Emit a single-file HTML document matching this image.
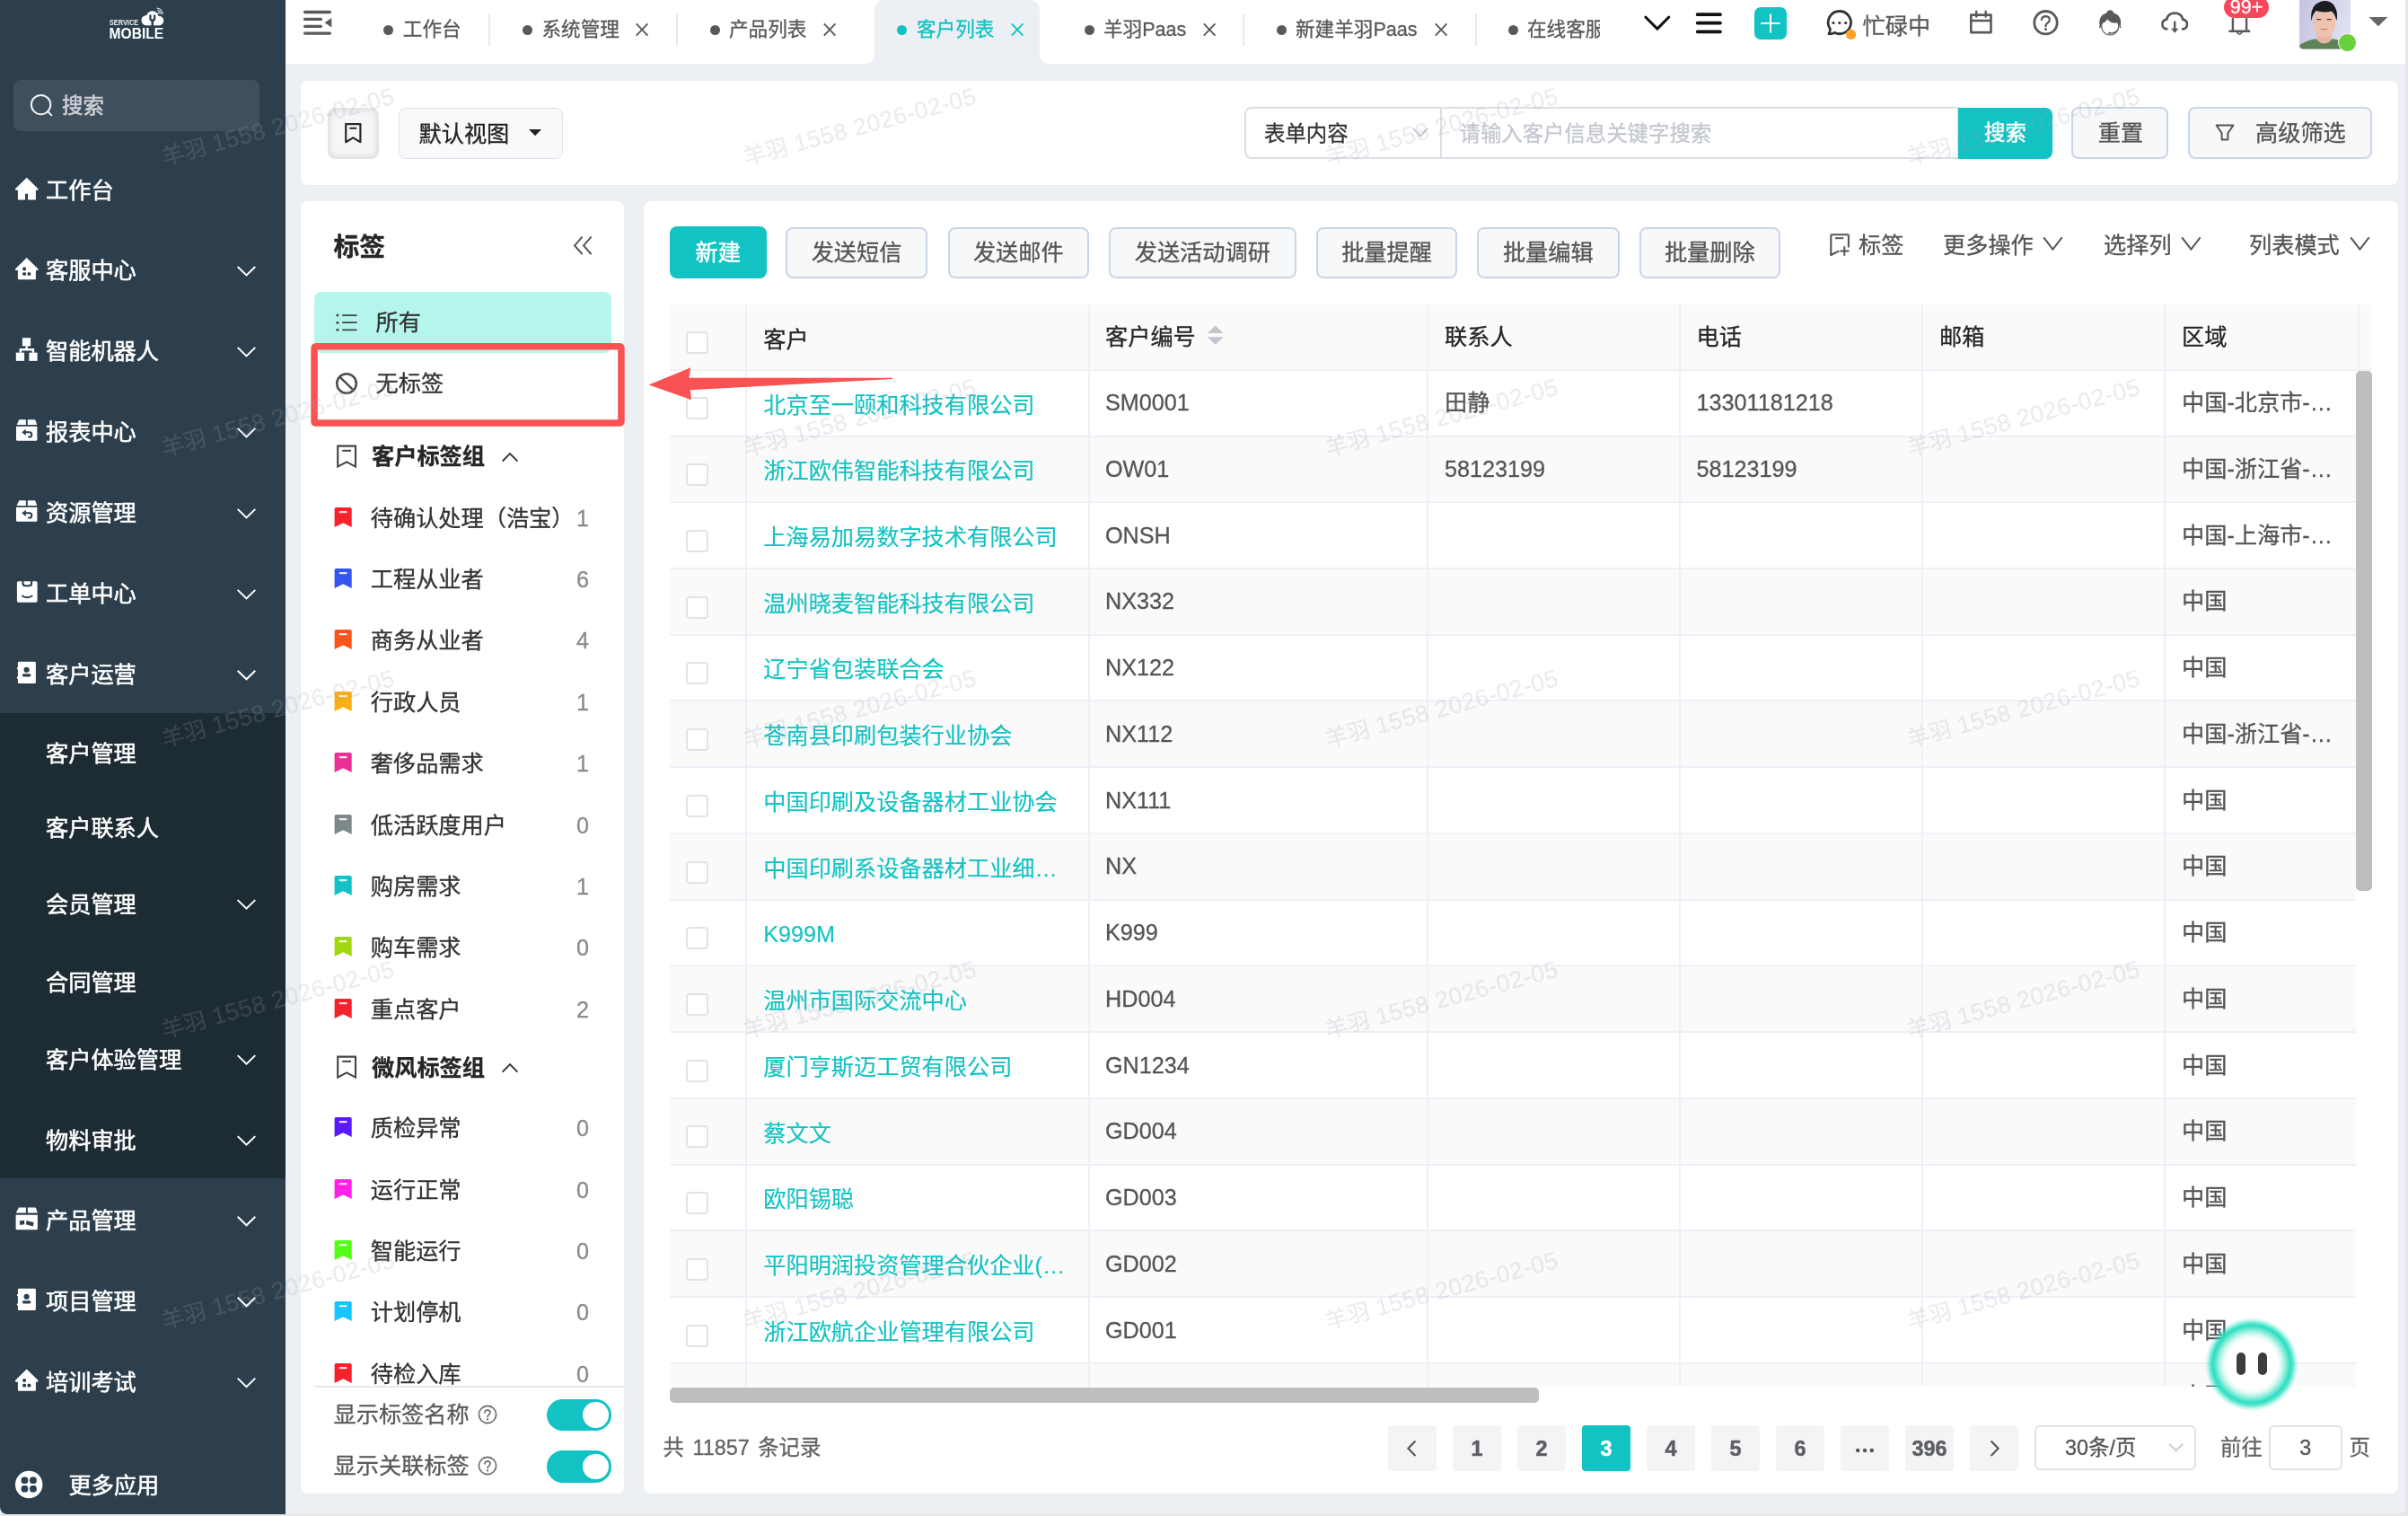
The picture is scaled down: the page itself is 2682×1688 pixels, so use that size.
<!DOCTYPE html>
<html lang="zh-CN">
<head>
<meta charset="utf-8">
<title>客户列表</title>
<style>
*{box-sizing:border-box;margin:0;padding:0}
html,body{width:2682px;height:1688px;overflow:hidden;background:#e6e6e6}
body{font-family:"Liberation Sans","Noto Sans CJK SC",sans-serif;position:relative;color:#333;-webkit-font-smoothing:antialiased}
.a{position:absolute;display:block}
.t{position:absolute;display:block;line-height:40px;height:40px;white-space:nowrap}
body{-webkit-text-stroke:0.3px}
.wm{-webkit-text-stroke:0.2px}
#app{position:absolute;left:0;top:0;width:2679px;height:1686px;overflow:hidden;will-change:transform;background:#eceff4;border-radius:0 0 8px 8px}
.side{background:#2d3f4c}
.sub{background:#1d2b33}
.card{background:#fff;border-radius:8px}
.btn{border:2px solid #c9d6e7;background:#f7f8fa;border-radius:8px}
.pbtn{background:#13c2c2;border-radius:8px}
.pg{background:#f4f4f5;border-radius:4px;text-align:center;font-weight:700;color:#5c5f66;font-size:23.4px;line-height:52.4px;-webkit-text-stroke:0.5px}
.cb{border:2px solid #e1e3e8;border-radius:4px;background:#fff}
.vl{background:#eff0f7;width:2px}
.hl{background:#eff0f7;height:2px}
.wm{position:absolute;white-space:nowrap;font-size:26.6px;letter-spacing:0.45px;line-height:36px;color:rgba(160,165,182,0.2);transform:rotate(-15deg);transform-origin:0 100%;pointer-events:none}
.wm b{font-weight:400;font-size:25.2px;letter-spacing:0}</style>
</head>
<body>
<div id="app">
<aside class="a side" style="left:0;top:0;width:318px;height:1686px;-webkit-text-stroke:0.55px"><div class="a sub" style="left:0px;top:793.8px;width:318px;height:518.2px;"></div>
<svg class="a" style="left:118px;top:4px" width="70" height="44" viewBox="118 4 70 44" xmlns="http://www.w3.org/2000/svg"><text x="121.8" y="28.3" font-family='Liberation Sans,Noto Sans CJK SC,sans-serif' font-weight="700" font-size="9.2" fill="#eef1f3" textLength="32.4" lengthAdjust="spacingAndGlyphs">SERVICE</text><text x="121.6" y="43.1" font-family='Liberation Sans,Noto Sans CJK SC,sans-serif' font-weight="700" font-size="17.2" fill="#fff" textLength="60.6" lengthAdjust="spacingAndGlyphs">MOBILE</text><g fill="#fff"><circle cx="163.2" cy="22.6" r="5.7"/><circle cx="169.8" cy="19.2" r="6.9"/><circle cx="177" cy="23" r="5.3"/><rect x="163.2" y="21.5" width="13.8" height="6.8"/></g><path d="M167.6 17.5 V20.5 Q167.6 22.7 169.8 22.9 V28.6 M172 17.5 V20.5 Q172 22.7 169.8 22.9" fill="none" stroke="#2d3f4c" stroke-width="2.6" stroke-linecap="round"/><rect x="168.6" y="16.4" width="2.5" height="4.6" fill="#fff"/><path d="M174.6 9 Q180.6 10 181.4 15.8 M175.2 11.3 Q178.7 12.2 179.3 15.8 M175.8 13.4 Q177 14 177.3 15.6" fill="none" stroke="#e9edf0" stroke-width="1.1"/></svg>
<div class="a" style="left:15px;top:89px;width:274px;height:57px;background:#3f4f5c;border-radius:8px"></div>
<svg class="a" style="left:30px;top:102px;" width="32" height="32" viewBox="0 0 32 32" xmlns="http://www.w3.org/2000/svg"><circle cx="15.6" cy="14.6" r="10.7" fill="none" stroke="#f2f4f5" stroke-width="2"/><path d="M23.4 22.4 L27.4 26.4" stroke="#f2f4f5" stroke-width="2" stroke-linecap="round"/></svg>
<span class="t" style="left:69px;top:98px;font-size:23.4px;color:#cdd2d7;">搜索</span>
<span class="t" style="left:51px;top:192.4px;font-size:25.2px;color:#fff;">工作台</span>
<span class="t" style="left:51px;top:281.35px;font-size:25.2px;color:#fff;">客服中心</span>
<span class="t" style="left:51px;top:371.3px;font-size:25.2px;color:#fff;">智能机器人</span>
<span class="t" style="left:51px;top:461.3px;font-size:25.2px;color:#fff;">报表中心</span>
<span class="t" style="left:51px;top:551.3px;font-size:25.2px;color:#fff;">资源管理</span>
<span class="t" style="left:51px;top:641.3px;font-size:25.2px;color:#fff;">工单中心</span>
<span class="t" style="left:51px;top:731.2px;font-size:25.2px;color:#fff;">客户运营</span>
<span class="t" style="left:51px;top:1339.2px;font-size:25.2px;color:#fff;">产品管理</span>
<span class="t" style="left:51px;top:1429.2px;font-size:25.2px;color:#fff;">项目管理</span>
<span class="t" style="left:51px;top:1519px;font-size:25.2px;color:#fff;">培训考试</span>
<span class="t" style="left:51px;top:818.9px;font-size:25.2px;color:#fff;">客户管理</span>
<span class="t" style="left:51px;top:901.5px;font-size:25.2px;color:#fff;">客户联系人</span>
<span class="t" style="left:51px;top:986.5px;font-size:25.2px;color:#fff;">会员管理</span>
<span class="t" style="left:51px;top:1073.5px;font-size:25.2px;color:#fff;">合同管理</span>
<span class="t" style="left:51px;top:1159.5px;font-size:25.2px;color:#fff;">客户体验管理</span>
<span class="t" style="left:51px;top:1249.5px;font-size:25.2px;color:#fff;">物料审批</span>
<span class="t" style="left:76.5px;top:1633.5px;font-size:25.2px;color:#fff;">更多应用</span>
<svg class="a" style="left:0;top:0" width="318" height="1685" viewBox="0 0 318 1685" fill="#fff" xmlns="http://www.w3.org/2000/svg"><path d="M29.7 197.8 L42.3 210 Q43.3 211.4 41.7 211.8 L39.9 211.8 V222.4 H31.1 V215.8 H28 V222.4 H19.9 V211.8 H17.8 Q16.2 211.4 17.2 210 Z"/><path d="M29.7 286.9 L42.3 299.2 Q43.3 300.6 41.7 301 L39.9 301 V310.2 Q39.9 311.2 38.9 311.2 H20.9 Q19.9 311.2 19.9 310.2 V301 H17.8 Q16.2 300.6 17.2 299.2 Z"/><rect x="25.2" y="297.6" width="3.8" height="3.6" rx="1.3" fill="#2d3f4c"/><rect x="25.2" y="303.2" width="3.8" height="3.6" rx="1.3" fill="#2d3f4c"/><rect x="30.5" y="303.2" width="3.8" height="3.6" rx="1.3" fill="#2d3f4c"/><path d="M264.7 296.95 L274.5 306.45 L284.3 296.95" fill="none" stroke="#fff" stroke-width="2"/><rect x="24.9" y="376.15" width="9.2" height="9.2"/><rect x="17.8" y="392.65" width="9.3" height="9.2"/><rect x="32.4" y="392.65" width="9.2" height="9.2"/><path d="M29.7 385.15 V389.15 M22.8 392.75 V389.15 H36.9 V392.75" fill="none" stroke="#fff" stroke-width="2.5"/><path d="M264.7 386.9 L274.5 396.4 L284.3 386.9" fill="none" stroke="#fff" stroke-width="2"/><path d="M21.3 467.3 H28.9 V472.9 H18.6 Z M30.8 467.3 H38.3 Q39.2 467.3 39.6 468.3 L41.2 472.9 H30.8 Z"/><path d="M18 474.8 H41.4 V489.2 Q41.4 490.7 39.9 490.7 H19.5 Q18 490.7 18 489.2 Z"/><path d="M24.2 481.3 L28.9 477.7 V484.9 Z" fill="#2d3f4c"/><path d="M28.5 481.3 H33 Q35.3 481.3 35.3 483.9 Q35.3 486.5 33 486.5 H31.2" fill="none" stroke="#2d3f4c" stroke-width="2"/><path d="M264.7 476.9 L274.5 486.4 L284.3 476.9" fill="none" stroke="#fff" stroke-width="2"/><path d="M21.3 557.3 H28.9 V562.9 H18.6 Z M30.8 557.3 H38.3 Q39.2 557.3 39.6 558.3 L41.2 562.9 H30.8 Z"/><path d="M18 564.8 H41.4 V579.2 Q41.4 580.7 39.9 580.7 H19.5 Q18 580.7 18 579.2 Z"/><path d="M24.2 571.3 L28.9 567.7 V574.9 Z" fill="#2d3f4c"/><path d="M28.5 571.3 H33 Q35.3 571.3 35.3 573.9 Q35.3 576.5 33 576.5 H31.2" fill="none" stroke="#2d3f4c" stroke-width="2"/><path d="M264.7 566.9 L274.5 576.4 L284.3 566.9" fill="none" stroke="#fff" stroke-width="2"/><rect x="18.9" y="647.3" width="22.7" height="23.4" rx="1.6"/><path d="M25.5 646.8 V649.5 Q25.5 652.3 28.6 652.3 H32 Q35.1 652.3 35.1 649.5 V646.8" fill="none" stroke="#2d3f4c" stroke-width="2.1"/><path d="M24.9 663.5 Q30.3 666.9 35.6 663.5" fill="none" stroke="#2d3f4c" stroke-width="2" stroke-linecap="round"/><path d="M264.7 656.9 L274.5 666.4 L284.3 656.9" fill="none" stroke="#fff" stroke-width="2"/><rect x="19.9" y="736.75" width="20" height="24.3" rx="1.4"/><rect x="18.9" y="742.95" width="2" height="2.4" rx="0.8"/><rect x="18.9" y="753.35" width="2" height="2.4" rx="0.8"/><circle cx="29.6" cy="745.75" r="3.1" fill="#2d3f4c"/><rect x="24.8" y="750.15" width="9.6" height="3.3" rx="1.6" fill="#2d3f4c"/><path d="M264.7 746.8 L274.5 756.3 L284.3 746.8" fill="none" stroke="#fff" stroke-width="2"/><path d="M20.9 1344.6 H28.9 V1350.6 H17.8 Z M30.9 1344.6 H38.9 Q39.8 1344.6 40.2 1345.6 L41.8 1350.6 H30.9 Z"/><path d="M17.6 1352.7 H41.9 V1367.7 Q41.9 1369.2 40.4 1369.2 H19.1 Q17.6 1369.2 17.6 1367.7 Z"/><path d="M21.7 1359.6 L26.9 1358.8 L27.4 1363.2 L22.3 1364 Z M29.6 1359 L37.8 1361.2 L36.7 1365.5 L28.9 1363.3 Z" fill="#2d3f4c"/><path d="M264.7 1354.8 L274.5 1364.3 L284.3 1354.8" fill="none" stroke="#fff" stroke-width="2"/><rect x="19.9" y="1434.75" width="20" height="24.3" rx="1.4"/><rect x="18.9" y="1440.95" width="2" height="2.4" rx="0.8"/><rect x="18.9" y="1451.35" width="2" height="2.4" rx="0.8"/><circle cx="29.6" cy="1443.75" r="3.1" fill="#2d3f4c"/><rect x="24.8" y="1448.15" width="9.6" height="3.3" rx="1.6" fill="#2d3f4c"/><path d="M264.7 1444.8 L274.5 1454.3 L284.3 1444.8" fill="none" stroke="#fff" stroke-width="2"/><path d="M29.7 1524.55 L42.3 1536.85 Q43.3 1538.25 41.7 1538.65 L39.9 1538.65 V1547.85 Q39.9 1548.85 38.9 1548.85 H20.9 Q19.9 1548.85 19.9 1547.85 V1538.65 H17.8 Q16.2 1538.25 17.2 1536.85 Z"/><rect x="25.2" y="1535.25" width="3.8" height="3.6" rx="1.3" fill="#2d3f4c"/><rect x="25.2" y="1540.85" width="3.8" height="3.6" rx="1.3" fill="#2d3f4c"/><rect x="30.5" y="1540.85" width="3.8" height="3.6" rx="1.3" fill="#2d3f4c"/><path d="M264.7 1534.6 L274.5 1544.1 L284.3 1534.6" fill="none" stroke="#fff" stroke-width="2"/><path d="M264.7 1002.1 L274.5 1011.6 L284.3 1002.1" fill="none" stroke="#fff" stroke-width="2"/><path d="M264.7 1175.1 L274.5 1184.6 L284.3 1175.1" fill="none" stroke="#fff" stroke-width="2"/><path d="M264.7 1265.1 L274.5 1274.6 L284.3 1265.1" fill="none" stroke="#fff" stroke-width="2"/><circle cx="32.2" cy="1653" r="15.2"/><g fill="#2d3f4c"><rect x="23.6" y="1644.4" width="7.7" height="7.7" rx="3.4"/><rect x="33.1" y="1644.4" width="7.7" height="7.7" rx="3.4"/><rect x="23.6" y="1653.9" width="7.7" height="7.7" rx="3.4"/><rect x="33.1" y="1653.9" width="7.7" height="7.7" rx="3.4"/></g></svg></aside>
<header class="a" style="left:318px;top:0;width:2361px;height:71px;background:#fff"><svg class="a" style="left:18px;top:10px;" width="36" height="31" viewBox="0 0 36 31" xmlns="http://www.w3.org/2000/svg"><g stroke="#595959" stroke-width="3.3" stroke-linecap="round"><path d="M3.6 3.5 H31.4 M3.6 11.4 H21.4 M3.6 19.3 H21.4 M3.6 27.2 H31.4"/></g><path d="M25.6 15.3 L33.3 9.9 V20.6 Z" fill="#595959"/></svg>
<svg class="a" style="left:644px;top:0px;" width="208" height="71" viewBox="0 0 208 71" xmlns="http://www.w3.org/2000/svg"><path d="M0 71 Q12 71 12 59 V12 Q12 0 24 0 H184 Q196 0 196 12 V59 Q196 71 208 71 Z" fill="#eceff4"/></svg>
<div class="a" style="left:109.1px;top:27.5px;width:11px;height:11px;border-radius:50%;background:#595959"></div>
<span class="t" style="left:130.8px;top:13.1px;font-size:21.6px;color:#595959;">工作台</span>
<div class="a" style="left:264px;top:27.5px;width:11px;height:11px;border-radius:50%;background:#595959"></div>
<span class="t" style="left:285.5px;top:13.1px;font-size:21.6px;color:#595959;">系统管理</span>
<svg class="a" style="left:389px;top:24.3px;" width="16" height="18" viewBox="0 0 16 18" xmlns="http://www.w3.org/2000/svg"><path d="M1.8 2.4 L14.4 15.6 M14.4 2.4 L1.8 15.6" fill="none" stroke="#595959" stroke-width="1.9"/></svg>
<div class="a" style="left:472.5px;top:27.5px;width:11px;height:11px;border-radius:50%;background:#595959"></div>
<span class="t" style="left:494px;top:13.1px;font-size:21.6px;color:#595959;">产品列表</span>
<svg class="a" style="left:598px;top:24.3px;" width="16" height="18" viewBox="0 0 16 18" xmlns="http://www.w3.org/2000/svg"><path d="M1.8 2.4 L14.4 15.6 M14.4 2.4 L1.8 15.6" fill="none" stroke="#595959" stroke-width="1.9"/></svg>
<div class="a" style="left:681px;top:27.5px;width:11px;height:11px;border-radius:50%;background:#13c2c2"></div>
<span class="t" style="left:703px;top:13.1px;font-size:21.6px;color:#13c2c2;">客户列表</span>
<svg class="a" style="left:806.8px;top:24.3px;" width="16" height="18" viewBox="0 0 16 18" xmlns="http://www.w3.org/2000/svg"><path d="M1.8 2.4 L14.4 15.6 M14.4 2.4 L1.8 15.6" fill="none" stroke="#13c2c2" stroke-width="1.9"/></svg>
<div class="a" style="left:890px;top:27.5px;width:11px;height:11px;border-radius:50%;background:#595959"></div>
<span class="t" style="left:911px;top:13.1px;font-size:21.6px;color:#595959;">羊羽Paas</span>
<svg class="a" style="left:1021px;top:24.3px;" width="16" height="18" viewBox="0 0 16 18" xmlns="http://www.w3.org/2000/svg"><path d="M1.8 2.4 L14.4 15.6 M14.4 2.4 L1.8 15.6" fill="none" stroke="#595959" stroke-width="1.9"/></svg>
<div class="a" style="left:1103.5px;top:27.5px;width:11px;height:11px;border-radius:50%;background:#595959"></div>
<span class="t" style="left:1125px;top:13.1px;font-size:21.6px;color:#595959;">新建羊羽Paas</span>
<svg class="a" style="left:1278.8px;top:24.3px;" width="16" height="18" viewBox="0 0 16 18" xmlns="http://www.w3.org/2000/svg"><path d="M1.8 2.4 L14.4 15.6 M14.4 2.4 L1.8 15.6" fill="none" stroke="#595959" stroke-width="1.9"/></svg>
<div class="a" style="left:1361.5px;top:27.5px;width:11px;height:11px;border-radius:50%;background:#595959"></div>
<div class="a" style="left:1382px;top:12px;width:81.5px;height:42px;overflow:hidden"><span class="t" style="left:1px;top:1.1px;font-size:21.6px;color:#595959">在线客服</span></div>
<div class="a" style="left:226px;top:15px;width:2px;height:36px;background:#e9e9e9"></div>
<div class="a" style="left:434.8px;top:15px;width:2px;height:36px;background:#e9e9e9"></div>
<div class="a" style="left:1066px;top:15px;width:2px;height:36px;background:#e9e9e9"></div>
<div class="a" style="left:1324.5px;top:15px;width:2px;height:36px;background:#e9e9e9"></div>
<svg class="a" style="left:1510px;top:14px;" width="36" height="24" viewBox="0 0 36 24" xmlns="http://www.w3.org/2000/svg"><path d="M4.8 5 L17.9 18.1 L30.8 5" fill="none" stroke="#111" stroke-width="3" stroke-linecap="round" stroke-linejoin="round"/></svg>
<svg class="a" style="left:1568px;top:12px;" width="34" height="28" viewBox="0 0 34 28" xmlns="http://www.w3.org/2000/svg"><path d="M4.6 4.2 H30 M4.6 13.6 H30 M4.6 23.3 H30" fill="none" stroke="#111" stroke-width="3.7" stroke-linecap="round"/></svg>
<div class="a" style="left:1636px;top:8px;width:36px;height:36px;background:#13c2c2;border-radius:7px"><svg class="a" style="left:0;top:0" width="36" height="36" viewBox="0 0 36 36"><path d="M18 7.6 V28.4 M7.4 18 H28.4" stroke="#fff" stroke-width="2" fill="none"/></svg></div>
<svg class="a" style="left:1712px;top:8px;" width="40" height="40" viewBox="0 0 40 40" xmlns="http://www.w3.org/2000/svg"><path d="M18.9 4.5 A12.6 12.6 0 1 1 13.2 28.3 Q10.4 30.2 6.9 29.6 Q8.6 27.4 8.4 24.2 A12.6 12.6 0 0 1 18.9 4.5 Z" fill="none" stroke="#333" stroke-width="2.8" stroke-linejoin="round"/><circle cx="12" cy="17.5" r="1.6" fill="#333"/><circle cx="18.8" cy="17.5" r="1.6" fill="#333"/><circle cx="25.7" cy="17.5" r="1.6" fill="#333"/><circle cx="31.6" cy="30.4" r="5.6" fill="#ffa229"/></svg>
<span class="t" style="left:1756.5px;top:8.8px;font-size:25.2px;color:#595959;">忙碌中</span>
<svg class="a" style="left:1872px;top:10px;" width="34" height="32" viewBox="0 0 34 32" xmlns="http://www.w3.org/2000/svg"><path d="M5.3 6.6 H27.5 V26.1 H5.3 Z M5.3 13 H27.5" fill="none" stroke="#595959" stroke-width="2.6" stroke-linejoin="round"/><path d="M11.2 2.6 V8.6 M21.7 2.6 V8.6" stroke="#595959" stroke-width="2.4" stroke-linecap="round"/></svg>
<svg class="a" style="left:1944px;top:9px;" width="34" height="34" viewBox="0 0 34 34" xmlns="http://www.w3.org/2000/svg"><circle cx="16.5" cy="16.2" r="12.7" fill="none" stroke="#595959" stroke-width="2.8"/><path d="M11.9 13.2 Q12.2 9.2 16.5 9.2 Q20.8 9.4 20.8 12.9 Q20.8 15 18.4 16.7 Q16.5 18 16.5 20.3" fill="none" stroke="#595959" stroke-width="2.2" stroke-linecap="round"/><circle cx="16.5" cy="23.6" r="1.5" fill="#595959"/></svg>
<svg class="a" style="left:2016px;top:9px;" width="34" height="34" viewBox="0 0 34 34" xmlns="http://www.w3.org/2000/svg"><ellipse cx="16.2" cy="20" rx="9.6" ry="10" fill="#fff" stroke="#595959" stroke-width="1.2"/><path d="M4.6 20.4 Q2.6 8.6 12 5.6 Q13.4 2.2 16.2 2.2 Q19 2.2 20.4 5.6 Q29.8 8.6 27.8 20.4 Q28.6 20.6 28.4 22 Q27.4 22.6 26.6 21.4 Q26.6 17.4 24.4 16.4 Q17.2 17.4 13.2 12.4 Q11.6 15.6 7 17.6 Q5.8 19.2 5.8 21.4 Q5 22.6 4 22 Q3.8 20.6 4.6 20.4 Z" fill="#595959"/><path d="M25.4 23.6 Q22.6 27.8 15.8 28" fill="none" stroke="#595959" stroke-width="1.2"/><circle cx="15.6" cy="28" r="1.3" fill="#595959"/></svg>
<svg class="a" style="left:2086px;top:10px;" width="38" height="32" viewBox="0 0 38 32" xmlns="http://www.w3.org/2000/svg"><path d="M10.4 22.4 Q4.4 22.4 4.4 16.9 Q4.4 12.4 9.2 11.6 Q10.8 4.6 18.2 4.6 Q25.6 4.6 27.2 11.6 Q32 12.4 32 16.9 Q32 22.4 26 22.4" fill="none" stroke="#595959" stroke-width="2.6" stroke-linecap="butt"/><path d="M18.2 13.6 V23.4" stroke="#595959" stroke-width="2.4"/><path d="M14.1 21.7 H22.3 L18.2 26.8 Z" fill="#595959"/></svg>
<svg class="a" style="left:2162px;top:16px;" width="30" height="28" viewBox="0 0 30 28" xmlns="http://www.w3.org/2000/svg"><path d="M6.9 18.6 V5 M22.1 5 V18.6 M3.4 18.7 H25.2" fill="none" stroke="#595959" stroke-width="2.4" stroke-linecap="round"/><path d="M11.5 19.6 Q14.3 24.6 17.2 19.6" fill="none" stroke="#595959" stroke-width="1.8"/></svg>
<div class="a" style="left:2159px;top:-4px;width:50.2px;height:24.2px;background:#f5485a;border-radius:12.1px;color:#fff;font-size:21.6px;line-height:24px;text-align:center;letter-spacing:0"><span style="position:relative;top:-0.4px">99+</span></div>
<svg class="a" style="left:2243px;top:0px;" width="57.2" height="54.8" viewBox="0 0 57.2 54.8" xmlns="http://www.w3.org/2000/svg"><defs><clipPath id="avc"><path d="M0 0 H57.2 V49.8 Q57.2 54.8 52.2 54.8 H5 Q0 54.8 0 49.8 Z"/></clipPath><linearGradient id="avg" x1="0" y1="0" x2="1" y2="0.3"><stop offset="0" stop-color="#c3c3e0"/><stop offset="1" stop-color="#dddff0"/></linearGradient></defs><g clip-path="url(#avc)"><rect width="57.2" height="54.8" fill="url(#avg)"/><path d="M0 54.8 V50.6 Q6 46 16.6 43.6 H39.4 Q50 46 57.2 50.6 V54.8 Z" fill="#5f8257"/><path d="M19.6 36 H35.6 V44.4 Q27.6 52.4 19.6 44.4 Z" fill="#e6b8a2"/><ellipse cx="27.6" cy="25.4" rx="12.6" ry="15.8" fill="#eec3ae"/><path d="M13.4 23.6 Q11.2 6.8 22.6 2.2 Q34.6 -1.6 39.6 7.8 Q43.4 13.6 41.4 23.2 Q39.4 14.6 35.6 12.6 Q26.6 14.6 18.6 12 Q14.6 15.6 13.4 23.6 Z" fill="#1c1b1f"/><path d="M19.2 21.6 H24.2 M30.6 21.6 H35.6" stroke="#4a3a36" stroke-width="1.3"/><path d="M23.8 32.2 Q27.6 33.6 31.4 32.2" stroke="#c98078" stroke-width="1.3" fill="none"/></g></svg>
<div class="a" style="left:2286.4px;top:36.7px;width:21px;height:21px;background:#67d03a;border-radius:50%;border:1.5px solid #fff"></div>
<svg class="a" style="left:2318px;top:16px;" width="26" height="16" viewBox="0 0 26 16" xmlns="http://www.w3.org/2000/svg"><path d="M2.5 2.9 H23.3 L12.9 13.3 Z" fill="#666"/></svg></header>
<main>
<section class="a card" style="left:335px;top:90px;width:2336px;height:116px"><div class="a" style="left:29.5px;top:29.5px;width:57.5px;height:57px;background:#f6f6f8;border-radius:8px;border:1px solid #e4e5e9;box-shadow:inset 0 0 7px 1px rgba(0,0,0,0.13)"></div>
<svg class="a" style="left:45px;top:44px;" width="28" height="28" viewBox="0 0 28 28" xmlns="http://www.w3.org/2000/svg"><path d="M5.2 4.1 H21.4 V24.2 L13.3 19.4 L5.2 24.2 Z" fill="none" stroke="#2a2a2a" stroke-width="2.2" stroke-linejoin="round"/><path d="M9.4 8.8 H17.2" stroke="#2a2a2a" stroke-width="2"/></svg>
<div class="a" style="left:109px;top:29.5px;width:182.5px;height:57px;background:#f8f9fb;border:1px solid #dfe2ea;border-radius:8px"></div>
<span class="t" style="left:131.5px;top:38.5px;font-size:25.2px;color:#222;">默认视图</span>
<svg class="a" style="left:252px;top:52px;" width="18" height="12" viewBox="0 0 18 12" xmlns="http://www.w3.org/2000/svg"><path d="M2 2.1 H16 L9 9.3 Z" fill="#222"/></svg>
<div class="a" style="left:1051.2px;top:29.3px;width:795.5px;height:57.5px;border:2px solid #dcdfe5;border-radius:8px 0 0 8px;background:#fff"></div>
<div class="a" style="left:1269px;top:30px;width:2px;height:56px;background:#dcdfe5"></div>
<span class="t" style="left:1073px;top:38.5px;font-size:23.4px;color:#333;">表单内容</span>
<svg class="a" style="left:1235px;top:49px;" width="24" height="18" viewBox="0 0 24 18" xmlns="http://www.w3.org/2000/svg"><path d="M3.8 4 L12 12.6 L20.2 4" fill="none" stroke="#c0c4cc" stroke-width="1.8"/></svg>
<span class="t" style="left:1290.5px;top:38.5px;font-size:23.4px;color:#c3c7cf;">请输入客户信息关键字搜索</span>
<div class="a" style="left:1846px;top:29.5px;width:104.5px;height:57.2px;border-radius:0 8px 8px 0;background:#13c2c2"></div>
<span class="t" style="left:1875px;top:37.7px;font-size:23.4px;color:#fff;-webkit-text-stroke:0.55px">搜索</span>
<div class="a btn" style="left:1972px;top:29.3px;width:108px;height:57.4px;"></div>
<span class="t" style="left:2001.8px;top:37.5px;font-size:25.2px;color:#555;">重置</span>
<div class="a btn" style="left:2101.7px;top:29.3px;width:205.5px;height:57.4px;"></div>
<svg class="a" style="left:2129px;top:45px;" width="28" height="26" viewBox="0 0 28 26" xmlns="http://www.w3.org/2000/svg"><path d="M4.6 4.5 H23.4 L17.4 13.2 V20.6 H10.6 V13.2 Z" fill="none" stroke="#555" stroke-width="2" stroke-linejoin="round"/></svg>
<span class="t" style="left:2177px;top:37.5px;font-size:25.2px;color:#555;">高级筛选</span></section>
<section class="a card" style="left:335px;top:224px;width:360px;height:1439px;overflow:hidden"><span class="t" style="left:36.5px;top:30.5px;font-size:28.8px;color:#262626;font-weight:700;">标签</span>
<svg class="a" style="left:301px;top:36px;" width="28" height="28" viewBox="0 0 28 28" xmlns="http://www.w3.org/2000/svg"><path d="M12.6 3.6 L4 13.4 L12.6 23.2 M22.6 3.6 L14 13.4 L22.6 23.2" fill="none" stroke="#555" stroke-width="2"/></svg>
<div class="a" style="left:15px;top:100.5px;width:331px;height:68px;background:#b4f5ec;border-radius:8px"></div>
<svg class="a" style="left:37px;top:122px;" width="28" height="26" viewBox="0 0 28 26" xmlns="http://www.w3.org/2000/svg"><path d="M9.2 5.1 H25.6 M9.2 13.2 H25.6 M9.2 21.3 H25.6" stroke="#444" stroke-width="1.8"/><circle cx="3.9" cy="5.1" r="1.5" fill="#444"/><circle cx="3.9" cy="13.2" r="1.5" fill="#444"/><circle cx="3.9" cy="21.3" r="1.5" fill="#444"/></svg>
<span class="t" style="left:83.5px;top:114.5px;font-size:25.2px;color:#333;">所有</span>
<svg class="a" style="left:37px;top:190px;" width="28" height="28" viewBox="0 0 28 28" xmlns="http://www.w3.org/2000/svg"><circle cx="14" cy="13" r="10.8" fill="none" stroke="#4a4a4a" stroke-width="2.5"/><path d="M6.4 5.6 L21.6 20.4" stroke="#4a4a4a" stroke-width="2.4"/></svg>
<span class="t" style="left:83.5px;top:182.5px;font-size:25.2px;color:#333;">无标签</span>
<svg class="a" style="left:37px;top:269.5px;" width="28" height="28" viewBox="0 0 28 28" xmlns="http://www.w3.org/2000/svg"><path d="M4.2 2.6 H24 V25.6 L14.1 20.4 L4.2 25.6 Z" fill="none" stroke="#444" stroke-width="2.1" stroke-linejoin="miter"/><path d="M9.2 7.8 H19" stroke="#444" stroke-width="2"/></svg>
<span class="t" style="left:79px;top:264.25px;font-size:25.2px;color:#262626;font-weight:700;">客户标签组</span>
<svg class="a" style="left:221px;top:276.5px;" width="24" height="16" viewBox="0 0 24 16" xmlns="http://www.w3.org/2000/svg"><path d="M3.6 12.6 L12 4 L20.4 12.6" fill="none" stroke="#333" stroke-width="1.9"/></svg>
<svg class="a" style="left:37px;top:339.65px;" width="21" height="24" viewBox="0 0 21 24" xmlns="http://www.w3.org/2000/svg"><path d="M0.6 2.6 Q0.6 0.9 2.3 0.9 H18 Q19.7 0.9 19.7 2.6 V22.9 L10.2 18.2 L0.6 22.9 Z" fill="#f5222d"/><rect x="5.6" y="5.1" width="9" height="2.2" rx="1" fill="#fff" opacity="0.85"/></svg>
<span class="t" style="left:77.75px;top:332.65px;font-size:25.2px;color:#333;">待确认处理（浩宝）</span>
<span class="t" style="left:294px;top:332.65px;font-size:25.2px;color:#8a8a8a;width:40px;text-align:center">1</span>
<svg class="a" style="left:37px;top:408.05px;" width="21" height="24" viewBox="0 0 21 24" xmlns="http://www.w3.org/2000/svg"><path d="M0.6 2.6 Q0.6 0.9 2.3 0.9 H18 Q19.7 0.9 19.7 2.6 V22.9 L10.2 18.2 L0.6 22.9 Z" fill="#3455f0"/><rect x="5.6" y="5.1" width="9" height="2.2" rx="1" fill="#fff" opacity="0.85"/></svg>
<span class="t" style="left:77.75px;top:401.05px;font-size:25.2px;color:#333;">工程从业者</span>
<span class="t" style="left:294px;top:401.05px;font-size:25.2px;color:#8a8a8a;width:40px;text-align:center">6</span>
<svg class="a" style="left:37px;top:476.45px;" width="21" height="24" viewBox="0 0 21 24" xmlns="http://www.w3.org/2000/svg"><path d="M0.6 2.6 Q0.6 0.9 2.3 0.9 H18 Q19.7 0.9 19.7 2.6 V22.9 L10.2 18.2 L0.6 22.9 Z" fill="#fa541c"/><rect x="5.6" y="5.1" width="9" height="2.2" rx="1" fill="#fff" opacity="0.85"/></svg>
<span class="t" style="left:77.75px;top:469.45px;font-size:25.2px;color:#333;">商务从业者</span>
<span class="t" style="left:294px;top:469.45px;font-size:25.2px;color:#8a8a8a;width:40px;text-align:center">4</span>
<svg class="a" style="left:37px;top:544.85px;" width="21" height="24" viewBox="0 0 21 24" xmlns="http://www.w3.org/2000/svg"><path d="M0.6 2.6 Q0.6 0.9 2.3 0.9 H18 Q19.7 0.9 19.7 2.6 V22.9 L10.2 18.2 L0.6 22.9 Z" fill="#faad14"/><rect x="5.6" y="5.1" width="9" height="2.2" rx="1" fill="#fff" opacity="0.85"/></svg>
<span class="t" style="left:77.75px;top:537.85px;font-size:25.2px;color:#333;">行政人员</span>
<span class="t" style="left:294px;top:537.85px;font-size:25.2px;color:#8a8a8a;width:40px;text-align:center">1</span>
<svg class="a" style="left:37px;top:613.25px;" width="21" height="24" viewBox="0 0 21 24" xmlns="http://www.w3.org/2000/svg"><path d="M0.6 2.6 Q0.6 0.9 2.3 0.9 H18 Q19.7 0.9 19.7 2.6 V22.9 L10.2 18.2 L0.6 22.9 Z" fill="#eb2f96"/><rect x="5.6" y="5.1" width="9" height="2.2" rx="1" fill="#fff" opacity="0.85"/></svg>
<span class="t" style="left:77.75px;top:606.25px;font-size:25.2px;color:#333;">奢侈品需求</span>
<span class="t" style="left:294px;top:606.25px;font-size:25.2px;color:#8a8a8a;width:40px;text-align:center">1</span>
<svg class="a" style="left:37px;top:681.65px;" width="21" height="24" viewBox="0 0 21 24" xmlns="http://www.w3.org/2000/svg"><path d="M0.6 2.6 Q0.6 0.9 2.3 0.9 H18 Q19.7 0.9 19.7 2.6 V22.9 L10.2 18.2 L0.6 22.9 Z" fill="#7d8888"/><rect x="5.6" y="5.1" width="9" height="2.2" rx="1" fill="#fff" opacity="0.85"/></svg>
<span class="t" style="left:77.75px;top:674.65px;font-size:25.2px;color:#333;">低活跃度用户</span>
<span class="t" style="left:294px;top:674.65px;font-size:25.2px;color:#8a8a8a;width:40px;text-align:center">0</span>
<svg class="a" style="left:37px;top:750.05px;" width="21" height="24" viewBox="0 0 21 24" xmlns="http://www.w3.org/2000/svg"><path d="M0.6 2.6 Q0.6 0.9 2.3 0.9 H18 Q19.7 0.9 19.7 2.6 V22.9 L10.2 18.2 L0.6 22.9 Z" fill="#13c2c2"/><rect x="5.6" y="5.1" width="9" height="2.2" rx="1" fill="#fff" opacity="0.85"/></svg>
<span class="t" style="left:77.75px;top:743.05px;font-size:25.2px;color:#333;">购房需求</span>
<span class="t" style="left:294px;top:743.05px;font-size:25.2px;color:#8a8a8a;width:40px;text-align:center">1</span>
<svg class="a" style="left:37px;top:818.45px;" width="21" height="24" viewBox="0 0 21 24" xmlns="http://www.w3.org/2000/svg"><path d="M0.6 2.6 Q0.6 0.9 2.3 0.9 H18 Q19.7 0.9 19.7 2.6 V22.9 L10.2 18.2 L0.6 22.9 Z" fill="#a0d911"/><rect x="5.6" y="5.1" width="9" height="2.2" rx="1" fill="#fff" opacity="0.85"/></svg>
<span class="t" style="left:77.75px;top:811.45px;font-size:25.2px;color:#333;">购车需求</span>
<span class="t" style="left:294px;top:811.45px;font-size:25.2px;color:#8a8a8a;width:40px;text-align:center">0</span>
<svg class="a" style="left:37px;top:886.85px;" width="21" height="24" viewBox="0 0 21 24" xmlns="http://www.w3.org/2000/svg"><path d="M0.6 2.6 Q0.6 0.9 2.3 0.9 H18 Q19.7 0.9 19.7 2.6 V22.9 L10.2 18.2 L0.6 22.9 Z" fill="#f5222d"/><rect x="5.6" y="5.1" width="9" height="2.2" rx="1" fill="#fff" opacity="0.85"/></svg>
<span class="t" style="left:77.75px;top:879.85px;font-size:25.2px;color:#333;">重点客户</span>
<span class="t" style="left:294px;top:879.85px;font-size:25.2px;color:#8a8a8a;width:40px;text-align:center">2</span>
<svg class="a" style="left:37px;top:949.7px;" width="28" height="28" viewBox="0 0 28 28" xmlns="http://www.w3.org/2000/svg"><path d="M4.2 2.6 H24 V25.6 L14.1 20.4 L4.2 25.6 Z" fill="none" stroke="#444" stroke-width="2.1" stroke-linejoin="miter"/><path d="M9.2 7.8 H19" stroke="#444" stroke-width="2"/></svg>
<span class="t" style="left:79px;top:944.5px;font-size:25.2px;color:#262626;font-weight:700;">微风标签组</span>
<svg class="a" style="left:221px;top:956.7px;" width="24" height="16" viewBox="0 0 24 16" xmlns="http://www.w3.org/2000/svg"><path d="M3.6 12.6 L12 4 L20.4 12.6" fill="none" stroke="#333" stroke-width="1.9"/></svg>
<svg class="a" style="left:37px;top:1019.25px;" width="21" height="24" viewBox="0 0 21 24" xmlns="http://www.w3.org/2000/svg"><path d="M0.6 2.6 Q0.6 0.9 2.3 0.9 H18 Q19.7 0.9 19.7 2.6 V22.9 L10.2 18.2 L0.6 22.9 Z" fill="#5b18ff"/><rect x="5.6" y="5.1" width="9" height="2.2" rx="1" fill="#fff" opacity="0.85"/></svg>
<span class="t" style="left:77.75px;top:1012.25px;font-size:25.2px;color:#333;">质检异常</span>
<span class="t" style="left:294px;top:1012.25px;font-size:25.2px;color:#8a8a8a;width:40px;text-align:center">0</span>
<svg class="a" style="left:37px;top:1087.65px;" width="21" height="24" viewBox="0 0 21 24" xmlns="http://www.w3.org/2000/svg"><path d="M0.6 2.6 Q0.6 0.9 2.3 0.9 H18 Q19.7 0.9 19.7 2.6 V22.9 L10.2 18.2 L0.6 22.9 Z" fill="#ff22e6"/><rect x="5.6" y="5.1" width="9" height="2.2" rx="1" fill="#fff" opacity="0.85"/></svg>
<span class="t" style="left:77.75px;top:1080.65px;font-size:25.2px;color:#333;">运行正常</span>
<span class="t" style="left:294px;top:1080.65px;font-size:25.2px;color:#8a8a8a;width:40px;text-align:center">0</span>
<svg class="a" style="left:37px;top:1156.05px;" width="21" height="24" viewBox="0 0 21 24" xmlns="http://www.w3.org/2000/svg"><path d="M0.6 2.6 Q0.6 0.9 2.3 0.9 H18 Q19.7 0.9 19.7 2.6 V22.9 L10.2 18.2 L0.6 22.9 Z" fill="#52ff14"/><rect x="5.6" y="5.1" width="9" height="2.2" rx="1" fill="#fff" opacity="0.85"/></svg>
<span class="t" style="left:77.75px;top:1149.05px;font-size:25.2px;color:#333;">智能运行</span>
<span class="t" style="left:294px;top:1149.05px;font-size:25.2px;color:#8a8a8a;width:40px;text-align:center">0</span>
<svg class="a" style="left:37px;top:1224.45px;" width="21" height="24" viewBox="0 0 21 24" xmlns="http://www.w3.org/2000/svg"><path d="M0.6 2.6 Q0.6 0.9 2.3 0.9 H18 Q19.7 0.9 19.7 2.6 V22.9 L10.2 18.2 L0.6 22.9 Z" fill="#14c6ff"/><rect x="5.6" y="5.1" width="9" height="2.2" rx="1" fill="#fff" opacity="0.85"/></svg>
<span class="t" style="left:77.75px;top:1217.45px;font-size:25.2px;color:#333;">计划停机</span>
<span class="t" style="left:294px;top:1217.45px;font-size:25.2px;color:#8a8a8a;width:40px;text-align:center">0</span>
<svg class="a" style="left:37px;top:1292.85px;" width="21" height="24" viewBox="0 0 21 24" xmlns="http://www.w3.org/2000/svg"><path d="M0.6 2.6 Q0.6 0.9 2.3 0.9 H18 Q19.7 0.9 19.7 2.6 V22.9 L10.2 18.2 L0.6 22.9 Z" fill="#f5222d"/><rect x="5.6" y="5.1" width="9" height="2.2" rx="1" fill="#fff" opacity="0.85"/></svg>
<span class="t" style="left:77.75px;top:1285.85px;font-size:25.2px;color:#333;">待检入库</span>
<span class="t" style="left:294px;top:1285.85px;font-size:25.2px;color:#8a8a8a;width:40px;text-align:center">0</span>
<div class="a" style="left:15px;top:1318.5px;width:345px;height:120.5px;background:#fff;border-top:2px solid #e6e8ef;border-radius:0 0 8px 0"></div>
<span class="t" style="left:36.5px;top:1330.5px;font-size:25.2px;color:#5a5a5a;">显示标签名称</span>
<svg class="a" style="left:195.5px;top:1338.5px;" width="24" height="24" viewBox="0 0 24 24" xmlns="http://www.w3.org/2000/svg"><circle cx="12" cy="12" r="9.6" fill="none" stroke="#666" stroke-width="1.6"/><path d="M8.9 9.9 Q9.1 7 12 7 Q15 7.1 15 9.6 Q15 11.2 13.3 12.3 Q12 13.3 12 14.8" fill="none" stroke="#666" stroke-width="1.6" stroke-linecap="round"/><circle cx="12" cy="17.4" r="1.1" fill="#666"/></svg>
<div class="a" style="left:274px;top:1333.6px;width:72px;height:35.6px;background:#13c2c2;border-radius:18px"><div class="a" style="right:3.4px;top:3.4px;width:28.8px;height:28.8px;border-radius:50%;background:#fff"></div></div>
<span class="t" style="left:36.5px;top:1388px;font-size:25.2px;color:#5a5a5a;">显示关联标签</span>
<svg class="a" style="left:195.5px;top:1396px;" width="24" height="24" viewBox="0 0 24 24" xmlns="http://www.w3.org/2000/svg"><circle cx="12" cy="12" r="9.6" fill="none" stroke="#666" stroke-width="1.6"/><path d="M8.9 9.9 Q9.1 7 12 7 Q15 7.1 15 9.6 Q15 11.2 13.3 12.3 Q12 13.3 12 14.8" fill="none" stroke="#666" stroke-width="1.6" stroke-linecap="round"/><circle cx="12" cy="17.4" r="1.1" fill="#666"/></svg>
<div class="a" style="left:274px;top:1391.3px;width:72px;height:35.6px;background:#13c2c2;border-radius:18px"><div class="a" style="right:3.4px;top:3.4px;width:28.8px;height:28.8px;border-radius:50%;background:#fff"></div></div></section>
<section class="a card" style="left:717px;top:224px;width:1954px;height:1439px"><div class="a pbtn" style="left:29px;top:28px;width:108px;height:58px;"></div>
<span class="t" style="left:57.5px;top:36.8px;font-size:25.2px;color:#fff;-webkit-text-stroke:0.55px">新建</span>
<div class="a btn" style="left:158px;top:28.5px;width:158px;height:57.2px;text-align:center;font-size:25.2px;line-height:52px;color:#555">发送短信</div>
<div class="a btn" style="left:338.5px;top:28.5px;width:157.5px;height:57.2px;text-align:center;font-size:25.2px;line-height:52px;color:#555">发送邮件</div>
<div class="a btn" style="left:518px;top:28.5px;width:208.5px;height:57.2px;text-align:center;font-size:25.2px;line-height:52px;color:#555">发送活动调研</div>
<div class="a btn" style="left:749px;top:28.5px;width:157px;height:57.2px;text-align:center;font-size:25.2px;line-height:52px;color:#555">批量提醒</div>
<div class="a btn" style="left:928px;top:28.5px;width:158.5px;height:57.2px;text-align:center;font-size:25.2px;line-height:52px;color:#555">批量编辑</div>
<div class="a btn" style="left:1108.5px;top:28.5px;width:157.5px;height:57.2px;text-align:center;font-size:25.2px;line-height:52px;color:#555">批量删除</div>
<svg class="a" style="left:1317px;top:34px;" width="30" height="30" viewBox="0 0 30 30" xmlns="http://www.w3.org/2000/svg"><path d="M14.2 21.4 L5.3 26 V4.6 Q5.3 3.2 6.7 3.2 H23.5 Q24.9 3.2 24.9 4.6 V17.6" fill="none" stroke="#555" stroke-width="2.1" stroke-linejoin="round"/><path d="M10 7.2 H19.2" stroke="#555" stroke-width="2"/><path d="M20.3 16.3 V26.8 M15.2 21.5 H25.5" stroke="#555" stroke-width="2"/></svg>
<span class="t" style="left:1353px;top:29px;font-size:25.2px;color:#555;">标签</span>
<span class="t" style="left:1447px;top:29px;font-size:25.2px;color:#555;">更多操作</span>
<svg class="a" style="left:1557px;top:36.8px;" width="26" height="20" viewBox="0 0 26 20" xmlns="http://www.w3.org/2000/svg"><path d="M2.2 3.4 L12.4 16.6 L22.6 3.4" fill="none" stroke="#555" stroke-width="2"/></svg>
<span class="t" style="left:1626px;top:29px;font-size:25.2px;color:#555;">选择列</span>
<svg class="a" style="left:1711px;top:36.8px;" width="26" height="20" viewBox="0 0 26 20" xmlns="http://www.w3.org/2000/svg"><path d="M2.2 3.4 L12.4 16.6 L22.6 3.4" fill="none" stroke="#555" stroke-width="2"/></svg>
<span class="t" style="left:1788px;top:29px;font-size:25.2px;color:#555;">列表模式</span>
<svg class="a" style="left:1898.5px;top:36.8px;" width="26" height="20" viewBox="0 0 26 20" xmlns="http://www.w3.org/2000/svg"><path d="M2.2 3.4 L12.4 16.6 L22.6 3.4" fill="none" stroke="#555" stroke-width="2"/></svg>
<div class="a" style="left:29px;top:115px;width:1896px;height:1204.6px;overflow:hidden"><div class="a" style="left:0px;top:0px;width:1896px;height:72px;background:#fafafa"></div>
<div class="a" style="left:0px;top:73px;width:1878px;height:73.73px;background:#fff"></div>
<div class="a" style="left:0px;top:146.73px;width:1878px;height:73.73px;background:#fafafa"></div>
<div class="a" style="left:0px;top:220.46px;width:1878px;height:73.73px;background:#fff"></div>
<div class="a" style="left:0px;top:294.19px;width:1878px;height:73.73px;background:#fafafa"></div>
<div class="a" style="left:0px;top:367.92px;width:1878px;height:73.73px;background:#fff"></div>
<div class="a" style="left:0px;top:441.65px;width:1878px;height:73.73px;background:#fafafa"></div>
<div class="a" style="left:0px;top:515.38px;width:1878px;height:73.73px;background:#fff"></div>
<div class="a" style="left:0px;top:589.11px;width:1878px;height:73.73px;background:#fafafa"></div>
<div class="a" style="left:0px;top:662.84px;width:1878px;height:73.73px;background:#fff"></div>
<div class="a" style="left:0px;top:736.57px;width:1878px;height:73.73px;background:#fafafa"></div>
<div class="a" style="left:0px;top:810.3px;width:1878px;height:73.73px;background:#fff"></div>
<div class="a" style="left:0px;top:884.03px;width:1878px;height:73.73px;background:#fafafa"></div>
<div class="a" style="left:0px;top:957.76px;width:1878px;height:73.73px;background:#fff"></div>
<div class="a" style="left:0px;top:1031.49px;width:1878px;height:73.73px;background:#fafafa"></div>
<div class="a" style="left:0px;top:1105.22px;width:1878px;height:73.73px;background:#fff"></div>
<div class="a" style="left:0px;top:1178.95px;width:1878px;height:73.73px;background:#fafafa"></div>
<div class="a hl" style="left:0px;top:72px;width:1896px;height:2px;"></div>
<div class="a hl" style="left:0px;top:146px;width:1878px;height:2px;"></div>
<div class="a hl" style="left:0px;top:219px;width:1878px;height:2px;"></div>
<div class="a hl" style="left:0px;top:293px;width:1878px;height:2px;"></div>
<div class="a hl" style="left:0px;top:367px;width:1878px;height:2px;"></div>
<div class="a hl" style="left:0px;top:440px;width:1878px;height:2px;"></div>
<div class="a hl" style="left:0px;top:514px;width:1878px;height:2px;"></div>
<div class="a hl" style="left:0px;top:588px;width:1878px;height:2px;"></div>
<div class="a hl" style="left:0px;top:662px;width:1878px;height:2px;"></div>
<div class="a hl" style="left:0px;top:735px;width:1878px;height:2px;"></div>
<div class="a hl" style="left:0px;top:809px;width:1878px;height:2px;"></div>
<div class="a hl" style="left:0px;top:883px;width:1878px;height:2px;"></div>
<div class="a hl" style="left:0px;top:957px;width:1878px;height:2px;"></div>
<div class="a hl" style="left:0px;top:1030px;width:1878px;height:2px;"></div>
<div class="a hl" style="left:0px;top:1104px;width:1878px;height:2px;"></div>
<div class="a hl" style="left:0px;top:1178px;width:1878px;height:2px;"></div>
<div class="a vl" style="left:84px;top:0px;width:2px;height:1206px;"></div>
<div class="a vl" style="left:466px;top:0px;width:2px;height:1206px;"></div>
<div class="a vl" style="left:843px;top:0px;width:2px;height:1206px;"></div>
<div class="a vl" style="left:1124px;top:0px;width:2px;height:1206px;"></div>
<div class="a vl" style="left:1394px;top:0px;width:2px;height:1206px;"></div>
<div class="a vl" style="left:1664px;top:0px;width:2px;height:1206px;"></div>
<div class="a vl" style="left:1880px;top:0px;width:2px;height:72px;"></div>
<div class="a cb" style="left:18px;top:29.7px;width:25px;height:25px;"></div>
<span class="t" style="left:104.3px;top:18.7px;font-size:25.2px;color:#262626;">客户</span>
<span class="t" style="left:485px;top:15.5px;font-size:25.2px;color:#262626;">客户编号</span>
<span class="t" style="left:863px;top:15.5px;font-size:25.2px;color:#262626;">联系人</span>
<span class="t" style="left:1143.5px;top:15.5px;font-size:25.2px;color:#262626;">电话</span>
<span class="t" style="left:1414px;top:15.5px;font-size:25.2px;color:#262626;">邮箱</span>
<span class="t" style="left:1684px;top:15.5px;font-size:25.2px;color:#262626;">区域</span>
<svg class="a" style="left:597px;top:21px;" width="22" height="26" viewBox="0 0 22 26" xmlns="http://www.w3.org/2000/svg"><path d="M1.9 10.9 L10.7 2.5 L19.5 10.9 Z M1.9 15.2 L10.7 23.7 L19.5 15.2 Z" fill="#c0c4cc"/></svg>
<div class="a cb" style="left:18px;top:103.4px;width:25px;height:25px;"></div>
<span class="t" style="left:104.3px;top:91.5px;font-size:25.2px;color:#13c2c2;-webkit-text-stroke:0.15px">北京至一颐和科技有限公司</span>
<span class="t" style="left:485px;top:89.3px;font-size:25.2px;color:#555;">SM0001</span>
<span class="t" style="left:863px;top:89.3px;font-size:25.2px;color:#555;">田静</span>
<span class="t" style="left:1143.5px;top:89.3px;font-size:25.2px;color:#555;">13301181218</span>
<span class="t" style="left:1684px;top:89.3px;font-size:25.2px;color:#555;">中国-北京市-…</span>
<div class="a cb" style="left:18px;top:177.13px;width:25px;height:25px;"></div>
<span class="t" style="left:104.3px;top:165.23px;font-size:25.2px;color:#13c2c2;-webkit-text-stroke:0.15px">浙江欧伟智能科技有限公司</span>
<span class="t" style="left:485px;top:163.03px;font-size:25.2px;color:#555;">OW01</span>
<span class="t" style="left:863px;top:163.03px;font-size:25.2px;color:#555;">58123199</span>
<span class="t" style="left:1143.5px;top:163.03px;font-size:25.2px;color:#555;">58123199</span>
<span class="t" style="left:1684px;top:163.03px;font-size:25.2px;color:#555;">中国-浙江省-…</span>
<div class="a cb" style="left:18px;top:250.86px;width:25px;height:25px;"></div>
<span class="t" style="left:104.3px;top:238.96px;font-size:25.2px;color:#13c2c2;-webkit-text-stroke:0.15px">上海易加易数字技术有限公司</span>
<span class="t" style="left:485px;top:236.76px;font-size:25.2px;color:#555;">ONSH</span>
<span class="t" style="left:1684px;top:236.76px;font-size:25.2px;color:#555;">中国-上海市-…</span>
<div class="a cb" style="left:18px;top:324.59px;width:25px;height:25px;"></div>
<span class="t" style="left:104.3px;top:312.69px;font-size:25.2px;color:#13c2c2;-webkit-text-stroke:0.15px">温州晓麦智能科技有限公司</span>
<span class="t" style="left:485px;top:310.49px;font-size:25.2px;color:#555;">NX332</span>
<span class="t" style="left:1684px;top:310.49px;font-size:25.2px;color:#555;">中国</span>
<div class="a cb" style="left:18px;top:398.32px;width:25px;height:25px;"></div>
<span class="t" style="left:104.3px;top:386.42px;font-size:25.2px;color:#13c2c2;-webkit-text-stroke:0.15px">辽宁省包装联合会</span>
<span class="t" style="left:485px;top:384.22px;font-size:25.2px;color:#555;">NX122</span>
<span class="t" style="left:1684px;top:384.22px;font-size:25.2px;color:#555;">中国</span>
<div class="a cb" style="left:18px;top:472.05px;width:25px;height:25px;"></div>
<span class="t" style="left:104.3px;top:460.15px;font-size:25.2px;color:#13c2c2;-webkit-text-stroke:0.15px">苍南县印刷包装行业协会</span>
<span class="t" style="left:485px;top:457.95px;font-size:25.2px;color:#555;">NX112</span>
<span class="t" style="left:1684px;top:457.95px;font-size:25.2px;color:#555;">中国-浙江省-…</span>
<div class="a cb" style="left:18px;top:545.78px;width:25px;height:25px;"></div>
<span class="t" style="left:104.3px;top:533.88px;font-size:25.2px;color:#13c2c2;-webkit-text-stroke:0.15px">中国印刷及设备器材工业协会</span>
<span class="t" style="left:485px;top:531.68px;font-size:25.2px;color:#555;">NX111</span>
<span class="t" style="left:1684px;top:531.68px;font-size:25.2px;color:#555;">中国</span>
<div class="a cb" style="left:18px;top:619.51px;width:25px;height:25px;"></div>
<span class="t" style="left:104.3px;top:607.61px;font-size:25.2px;color:#13c2c2;-webkit-text-stroke:0.15px">中国印刷系设备器材工业细…</span>
<span class="t" style="left:485px;top:605.41px;font-size:25.2px;color:#555;">NX</span>
<span class="t" style="left:1684px;top:605.41px;font-size:25.2px;color:#555;">中国</span>
<div class="a cb" style="left:18px;top:693.24px;width:25px;height:25px;"></div>
<span class="t" style="left:104.3px;top:681.34px;font-size:25.2px;color:#13c2c2;-webkit-text-stroke:0.15px">K999M</span>
<span class="t" style="left:485px;top:679.14px;font-size:25.2px;color:#555;">K999</span>
<span class="t" style="left:1684px;top:679.14px;font-size:25.2px;color:#555;">中国</span>
<div class="a cb" style="left:18px;top:766.97px;width:25px;height:25px;"></div>
<span class="t" style="left:104.3px;top:755.07px;font-size:25.2px;color:#13c2c2;-webkit-text-stroke:0.15px">温州市国际交流中心</span>
<span class="t" style="left:485px;top:752.87px;font-size:25.2px;color:#555;">HD004</span>
<span class="t" style="left:1684px;top:752.87px;font-size:25.2px;color:#555;">中国</span>
<div class="a cb" style="left:18px;top:840.7px;width:25px;height:25px;"></div>
<span class="t" style="left:104.3px;top:828.8px;font-size:25.2px;color:#13c2c2;-webkit-text-stroke:0.15px">厦门亨斯迈工贸有限公司</span>
<span class="t" style="left:485px;top:826.6px;font-size:25.2px;color:#555;">GN1234</span>
<span class="t" style="left:1684px;top:826.6px;font-size:25.2px;color:#555;">中国</span>
<div class="a cb" style="left:18px;top:914.43px;width:25px;height:25px;"></div>
<span class="t" style="left:104.3px;top:902.53px;font-size:25.2px;color:#13c2c2;-webkit-text-stroke:0.15px">蔡文文</span>
<span class="t" style="left:485px;top:900.33px;font-size:25.2px;color:#555;">GD004</span>
<span class="t" style="left:1684px;top:900.33px;font-size:25.2px;color:#555;">中国</span>
<div class="a cb" style="left:18px;top:988.16px;width:25px;height:25px;"></div>
<span class="t" style="left:104.3px;top:976.26px;font-size:25.2px;color:#13c2c2;-webkit-text-stroke:0.15px">欧阳锡聪</span>
<span class="t" style="left:485px;top:974.06px;font-size:25.2px;color:#555;">GD003</span>
<span class="t" style="left:1684px;top:974.06px;font-size:25.2px;color:#555;">中国</span>
<div class="a cb" style="left:18px;top:1061.89px;width:25px;height:25px;"></div>
<span class="t" style="left:104.3px;top:1049.99px;font-size:25.2px;color:#13c2c2;-webkit-text-stroke:0.15px">平阳明润投资管理合伙企业(…</span>
<span class="t" style="left:485px;top:1047.79px;font-size:25.2px;color:#555;">GD002</span>
<span class="t" style="left:1684px;top:1047.79px;font-size:25.2px;color:#555;">中国</span>
<div class="a cb" style="left:18px;top:1135.62px;width:25px;height:25px;"></div>
<span class="t" style="left:104.3px;top:1123.72px;font-size:25.2px;color:#13c2c2;-webkit-text-stroke:0.15px">浙江欧航企业管理有限公司</span>
<span class="t" style="left:485px;top:1121.52px;font-size:25.2px;color:#555;">GD001</span>
<span class="t" style="left:1684px;top:1121.52px;font-size:25.2px;color:#555;">中国</span>
<div class="a cb" style="left:18px;top:1209.35px;width:25px;height:25px;"></div>
<span class="t" style="left:1684px;top:1195.25px;font-size:25.2px;color:#555;">中国</span>
<div class="a" style="left:1878px;top:73.5px;width:18px;height:579px;background:#bebebe;border-radius:5px"></div></div>
<div class="a" style="left:28.7px;top:1320.5px;width:968px;height:17px;background:#bebebe;border-radius:5px"></div>
<span class="t" style="left:21.5px;top:1368.1px;font-size:23.4px;color:#606266;word-spacing:3px">共 11857 条记录</span>
<div class="a pg" style="left:829.1px;top:1363px;width:54px;height:50.6px;"><svg class="a" style="left:13px;top:12px" width="28" height="27" viewBox="0 0 28 27"><path d="M17.4 5.6 L9.4 13.8 L17.4 22" fill="none" stroke="#555" stroke-width="2.1"/></svg></div>
<div class="a pg" style="left:901.1px;top:1363px;width:54px;height:50.6px;">1</div>
<div class="a pg" style="left:973.1px;top:1363px;width:54px;height:50.6px;">2</div>
<div class="a pg" style="left:1045.1px;top:1363px;width:54px;height:50.6px;background:#13c2c2;color:#fff">3</div>
<div class="a pg" style="left:1117.1px;top:1363px;width:54px;height:50.6px;">4</div>
<div class="a pg" style="left:1189.1px;top:1363px;width:54px;height:50.6px;">5</div>
<div class="a pg" style="left:1261.1px;top:1363px;width:54px;height:50.6px;">6</div>
<div class="a pg" style="left:1333.1px;top:1363px;width:54px;height:50.6px;"><svg class="a" style="left:0;top:0" width="54" height="50" viewBox="0 0 54 50"><circle cx="19.2" cy="28" r="2.2" fill="#555"/><circle cx="27" cy="28" r="2.2" fill="#555"/><circle cx="34.8" cy="28" r="2.2" fill="#555"/></svg></div>
<div class="a pg" style="left:1405.1px;top:1363px;width:54px;height:50.6px;">396</div>
<div class="a pg" style="left:1477.1px;top:1363px;width:54px;height:50.6px;"><svg class="a" style="left:13px;top:12px" width="28" height="27" viewBox="0 0 28 27"><path d="M10.6 5.6 L18.6 13.8 L10.6 22" fill="none" stroke="#555" stroke-width="2.1"/></svg></div>
<div class="a" style="left:1549px;top:1363.2px;width:179.5px;height:50.2px;border:2px solid #dfe1e6;border-radius:6px;background:#fff"></div>
<span class="t" style="left:1583px;top:1368.1px;font-size:23.4px;color:#555;">30条/页</span>
<svg class="a" style="left:1695px;top:1379px;" width="24" height="18" viewBox="0 0 24 18" xmlns="http://www.w3.org/2000/svg"><path d="M4 4.6 L11.6 12.4 L19.2 4.6" fill="none" stroke="#c0c4cc" stroke-width="1.7"/></svg>
<span class="t" style="left:1756px;top:1368.1px;font-size:23.4px;color:#606266;">前往</span>
<div class="a" style="left:1810px;top:1363.2px;width:81.5px;height:50.2px;border:2px solid #dfe1e6;border-radius:6px;background:#fff;text-align:center;font-size:23.4px;line-height:46px;color:#555">3</div>
<span class="t" style="left:1899.5px;top:1368.1px;font-size:23.4px;color:#606266;">页</span></section>
</main>
<svg class="a" style="left:344px;top:380px;" width="354" height="97" viewBox="0 0 354 97" xmlns="http://www.w3.org/2000/svg"><rect x="6.05" y="5.75" width="341.9" height="85.3" rx="1.5" fill="none" stroke="#fa5252" stroke-width="7.5" stroke-linejoin="round"/></svg>
<svg class="a" style="left:716px;top:404px;" width="284" height="48" viewBox="0 0 284 48" xmlns="http://www.w3.org/2000/svg"><path d="M6.5 24.4 L53.2 5.3 L51.6 16.8 L278.2 16.8 L278.2 18 L52.7 30.3 L54 41.2 Z" fill="#fa5252"/></svg>
<div class="a" style="left:2456.2px;top:1466.7px;width:104px;height:104px;border-radius:50%;background:radial-gradient(circle closest-side, #fff 0, #fff 56%, #c9f6ec 66%, #6be9d2 76%, #2adfc2 83%, rgba(42,223,194,0.75) 88%, rgba(42,223,194,0.3) 94%, rgba(42,223,194,0) 100%)"><div class="a" style="left:34.7px;top:39.3px;width:10.4px;height:25.4px;border-radius:5px;background:#3d3d3d"></div><div class="a" style="left:58.6px;top:39.3px;width:10.4px;height:25.4px;border-radius:5px;background:#3d3d3d"></div></div>
<div class="a" style="left:0;top:0;width:2679px;height:1686px;pointer-events:none;overflow:hidden"><div class="wm" style="left:185.2px;top:157px"><b>羊羽</b> 1558 2026-02-05</div><div class="wm" style="left:833.2px;top:157px"><b>羊羽</b> 1558 2026-02-05</div><div class="wm" style="left:1481.2px;top:157px"><b>羊羽</b> 1558 2026-02-05</div><div class="wm" style="left:2129.2px;top:157px"><b>羊羽</b> 1558 2026-02-05</div><div class="wm" style="left:185.2px;top:481px"><b>羊羽</b> 1558 2026-02-05</div><div class="wm" style="left:833.2px;top:481px"><b>羊羽</b> 1558 2026-02-05</div><div class="wm" style="left:1481.2px;top:481px"><b>羊羽</b> 1558 2026-02-05</div><div class="wm" style="left:2129.2px;top:481px"><b>羊羽</b> 1558 2026-02-05</div><div class="wm" style="left:185.2px;top:805px"><b>羊羽</b> 1558 2026-02-05</div><div class="wm" style="left:833.2px;top:805px"><b>羊羽</b> 1558 2026-02-05</div><div class="wm" style="left:1481.2px;top:805px"><b>羊羽</b> 1558 2026-02-05</div><div class="wm" style="left:2129.2px;top:805px"><b>羊羽</b> 1558 2026-02-05</div><div class="wm" style="left:185.2px;top:1129px"><b>羊羽</b> 1558 2026-02-05</div><div class="wm" style="left:833.2px;top:1129px"><b>羊羽</b> 1558 2026-02-05</div><div class="wm" style="left:1481.2px;top:1129px"><b>羊羽</b> 1558 2026-02-05</div><div class="wm" style="left:2129.2px;top:1129px"><b>羊羽</b> 1558 2026-02-05</div><div class="wm" style="left:185.2px;top:1453px"><b>羊羽</b> 1558 2026-02-05</div><div class="wm" style="left:833.2px;top:1453px"><b>羊羽</b> 1558 2026-02-05</div><div class="wm" style="left:1481.2px;top:1453px"><b>羊羽</b> 1558 2026-02-05</div><div class="wm" style="left:2129.2px;top:1453px"><b>羊羽</b> 1558 2026-02-05</div></div>
</div>
</body>
</html>
